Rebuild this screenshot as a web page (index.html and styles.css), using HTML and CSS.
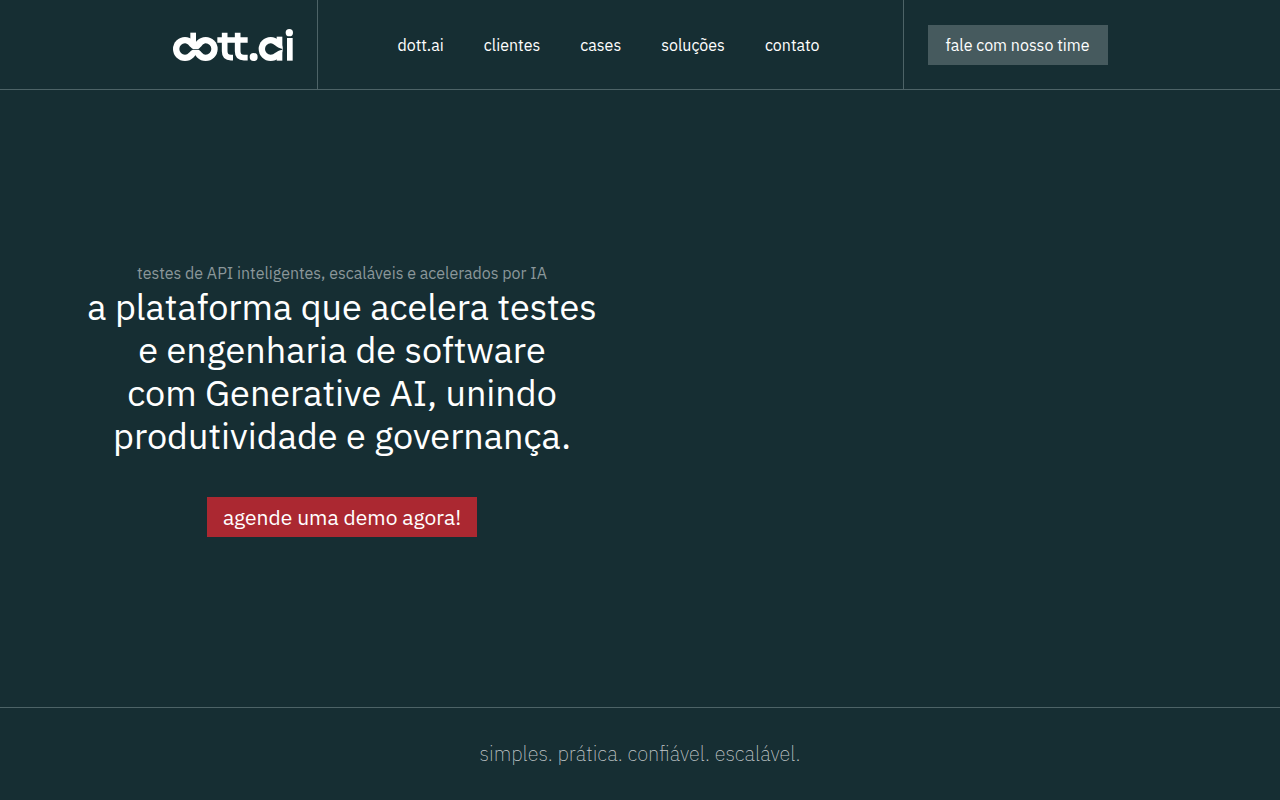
FILE: index.html
```html
<!DOCTYPE html>
<html lang="pt-BR">
<head>
<meta charset="utf-8">
<meta name="viewport" content="width=device-width, initial-scale=1">
<title>dott.ai</title>
<link rel="stylesheet" href="styles.css">
</head>
<body>
<header class="header">
  <a class="brand" href="#" aria-label="dott.ai">
    <svg class="logo" viewBox="24 27 360 96" fill="#fff" aria-hidden="true">
      <circle cx="60" cy="87" r="36"/>
      <circle cx="122" cy="87" r="36"/>
      <rect x="76" y="38" width="17" height="40"/>
      <path fill="#162e33" d="M60 70C70 70 74 82 84 87L100 87C109 82 113 70 122 70A17 17 0 0 1 122 104C113 104 109 93 100 89L84 89C74 93 70 104 60 104A17 17 0 0 1 60 70Z"/>
      <path fill="none" stroke="#fff" stroke-width="17" d="M157 60H248M179 38V94Q179 113 198 113H204M218 38V94Q218 113 237 113H248"/>
      <circle cx="266" cy="111" r="12"/>
      <circle cx="317" cy="87" r="36"/>
      <rect x="335" y="50" width="17" height="72"/>
      <path fill="#162e33" d="M317 70C328 70 332 83 352 87V89C332 93 328 104 317 104A17 17 0 0 1 317 70Z"/>
      <rect x="366" y="54" width="17" height="68"/>
      <circle cx="373" cy="38" r="11"/>
    </svg>
  </a>
  <nav class="nav">
    <a href="#">dott.ai</a>
    <a href="#">clientes</a>
    <a href="#">cases</a>
    <a href="#">soluções</a>
    <a href="#">contato</a>
  </nav>
  <div class="contact">
    <a class="button button-muted" href="#">fale com nosso time</a>
  </div>
</header>
<main class="hero">
  <section class="intro">
    <p class="eyebrow">testes de API inteligentes, escaláveis e acelerados por IA</p>
    <h1 class="title">a plataforma que acelera testes<br>e engenharia de software<br>com Generative AI, unindo<br>produtividade e governança.</h1>
    <a class="button button-primary" href="#">agende uma demo agora!</a>
  </section>
</main>
<footer class="tagline">
  <p>simples. prática. confiável. escalável.</p>
</footer>
</body>
</html>
```
FILE: styles.css
```css
* {
  box-sizing: border-box;
}

body {
  margin: 0;
  min-height: 100vh;
  display: flex;
  flex-direction: column;
  background: #162e33;
  color: #fff;
  font-family: "IBM Plex Sans", Roboto, "Noto Sans", sans-serif;
  font-size: 16px;
  line-height: 24px;
}

a {
  color: inherit;
  text-decoration: none;
}

p,
h1 {
  margin: 0;
}

.header {
  display: flex;
  justify-content: center;
  min-height: 90px;
  border-bottom: 1px solid #4d6367;
}

.brand,
.nav,
.contact {
  display: flex;
  align-items: center;
}

.brand {
  padding: 0 24px;
}

.logo {
  width: 120px;
  height: 32px;
}

.nav {
  gap: 40px;
  padding: 0 83px 0 80px;
  border: solid #4d6367;
  border-width: 0 1px;
}

.contact {
  padding: 0 24px;
}

.button {
  display: inline-block;
  padding: 8px 16px;
}

.button-muted {
  padding: 8px 18px;
  background: #465a5e;
}

.button-primary {
  margin-top: 40px;
  background: #ab2831;
  font-size: 21px;
}

.hero {
  flex: 1;
  display: grid;
  grid-template-columns: 1fr 1fr;
  align-items: center;
  padding: 0 44px;
}

.intro {
  text-align: center;
}

.eyebrow {
  color: #8b979a;
  font-size: 16px;
}

.title {
  font-size: 36px;
  font-weight: 400;
  line-height: 43px;
  white-space: nowrap;
}

.tagline {
  padding: 34px 24px;
  border-top: 1px solid #4d6367;
  color: #c4cacc;
  font-size: 20px;
  font-weight: 200;
  text-align: center;
}
```
